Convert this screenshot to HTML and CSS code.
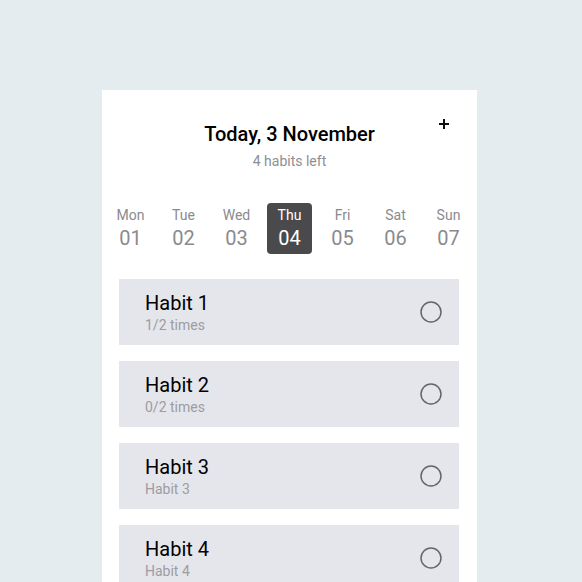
FILE: index.html
```html
<!DOCTYPE html>
<html>
<head>
    <meta name="viewport" content="width=device-width, initial-scale=1">
    <link rel="stylesheet" href="styles.css">
</head>
<body>

<div class="app">
    <div class="header">
        <h2 class="title">Today, 3 November</h2>
        <div class="subtitle">4 habits left</div>
        <button class="add-btn" aria-label="Add habit">
            <svg width="12" height="12" viewBox="0 0 12 12">
                <path d="M6 1 V11 M1 6 H11" stroke="#111" stroke-width="2" fill="none"/>
            </svg>
        </button>
    </div>

    <div class="days">
        <div class="day"><span class="day-name">Mon</span><span class="day-num">01</span></div>
        <div class="day"><span class="day-name">Tue</span><span class="day-num">02</span></div>
        <div class="day"><span class="day-name">Wed</span><span class="day-num">03</span></div>
        <div class="day active"><span class="day-name">Thu</span><span class="day-num">04</span></div>
        <div class="day"><span class="day-name">Fri</span><span class="day-num">05</span></div>
        <div class="day"><span class="day-name">Sat</span><span class="day-num">06</span></div>
        <div class="day"><span class="day-name">Sun</span><span class="day-num">07</span></div>
    </div>

    <div class="habits">
        <div class="habit">
            <div class="habit-text">
                <div class="habit-name">Habit 1</div>
                <div class="habit-sub">1/2 times</div>
            </div>
            <svg class="check" width="24" height="24" viewBox="0 0 24 24"><circle cx="12" cy="12" r="10" /></svg>
        </div>
        <div class="habit">
            <div class="habit-text">
                <div class="habit-name">Habit 2</div>
                <div class="habit-sub">0/2 times</div>
            </div>
            <svg class="check" width="24" height="24" viewBox="0 0 24 24"><circle cx="12" cy="12" r="10" /></svg>
        </div>
        <div class="habit">
            <div class="habit-text">
                <div class="habit-name">Habit 3</div>
                <div class="habit-sub">Habit 3</div>
            </div>
            <svg class="check" width="24" height="24" viewBox="0 0 24 24"><circle cx="12" cy="12" r="10" /></svg>
        </div>
        <div class="habit">
            <div class="habit-text">
                <div class="habit-name">Habit 4</div>
                <div class="habit-sub">Habit 4</div>
            </div>
            <svg class="check" width="24" height="24" viewBox="0 0 24 24"><circle cx="12" cy="12" r="10" /></svg>
        </div>
    </div>
</div>

</body>
</html>
```

FILE: styles.css
```css
html, body {
    height: 100%;
}

body {
    margin: 0;
    background-color: #e5ecf0;
    font-family: Roboto, "Liberation Sans", Arial, sans-serif;
    overflow: hidden;
}

.app {
    width: 375px;
    min-height: 600px;
    margin: 90px 0 0 102px;
    background-color: #fff;
}

.header {
    position: relative;
    padding-top: 32px;
    text-align: center;
}

.title {
    margin: 0;
    font-size: 20px;
    line-height: 24px;
    font-weight: 500;
    color: #000;
}

.subtitle {
    margin-top: 6px;
    font-size: 14px;
    line-height: 18px;
    color: #8e8e93;
}

.add-btn {
    position: absolute;
    top: 28px;
    left: 336px;
    width: 12px;
    height: 12px;
    padding: 0;
    border: none;
    background: none;
    cursor: pointer;
}

.add-btn svg {
    display: block;
}

.days {
    display: grid;
    grid-template-columns: repeat(7, 53px);
    justify-content: center;
    margin-top: 33px;
}

.day {
    justify-self: center;
    width: 45px;
    height: 51px;
    box-sizing: border-box;
    padding-top: 4px;
    display: flex;
    flex-direction: column;
    align-items: center;
    border-radius: 4px;
    color: #8a8a8f;
}

.day-name {
    font-size: 14px;
    line-height: 17px;
}

.day-num {
    margin-top: 2px;
    font-size: 20px;
    line-height: 24px;
}

.day.active {
    background-color: #4a4a4d;
    color: #fff;
}

.habits {
    display: flex;
    flex-direction: column;
    gap: 16px;
    margin-top: 25px;
    padding: 0 18px 0 17px;
}

.habit {
    display: flex;
    align-items: center;
    justify-content: space-between;
    height: 66px;
    box-sizing: border-box;
    padding: 0 16px 0 26px;
    background-color: #e5e6eb;
}

.habit-name {
    font-size: 20px;
    line-height: 24px;
    color: #000;
}

.habit-sub {
    margin-top: 1px;
    font-size: 14px;
    line-height: 18px;
    color: #9c9ca2;
}

.check circle {
    fill: none;
    stroke: #666;
    stroke-width: 1.5;
}
```
